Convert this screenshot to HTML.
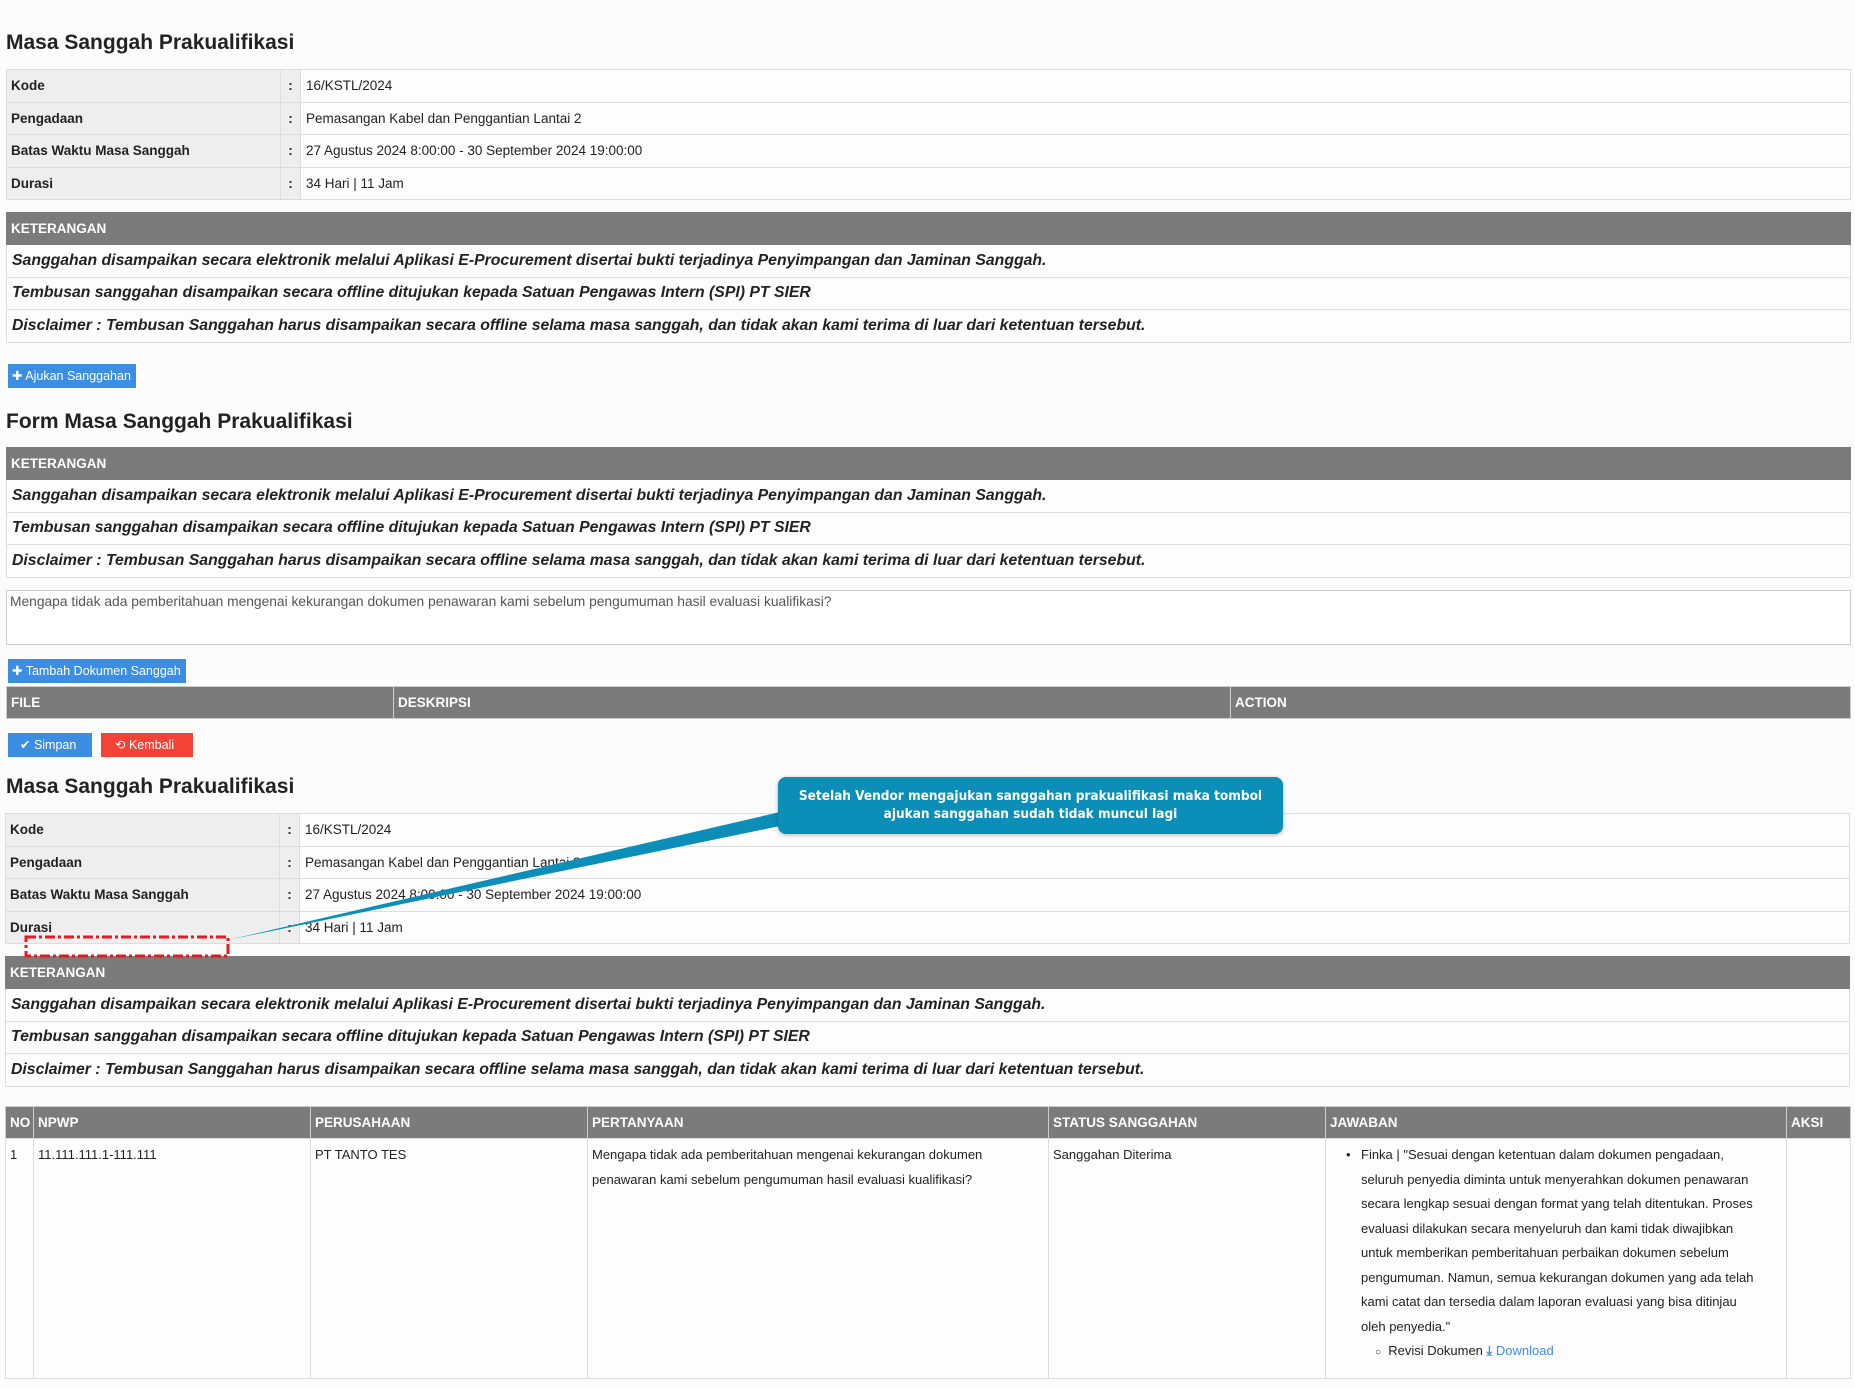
<!DOCTYPE html>
<html><head><meta charset="utf-8">
<style>
*{box-sizing:border-box;margin:0;padding:0}
body{width:1855px;height:1388px;background:#fcfcfc;font-family:"Liberation Sans",Arial,sans-serif;color:#222;position:relative;overflow:hidden;font-size:13.5px}
.a{position:absolute}
h2{position:absolute;left:6px;font-size:21px;font-weight:bold;color:#222}
table{position:absolute;left:6px;width:1845px;border-collapse:collapse;table-layout:fixed}
td,th{border:1px solid #ddd;padding:0 5px;text-align:left;vertical-align:middle;white-space:nowrap}
.info td{height:32.5px;background:#fdfdfd}
.info td.l{background:#eee;font-weight:bold;width:274px;padding-left:4px}
.info td.c{background:#eee;width:20px;padding:0;text-align:center;font-weight:bold}
.ket th{background:#7b7b7b;color:#fff;height:32px;font-size:13.5px;border-color:#7b7b7b;padding-left:4px}
.ket td{height:32.5px;font-weight:bold;font-style:italic;font-size:15.8px;background:#fdfdfd}
.btn{position:absolute;color:#fff;font-size:12.5px;line-height:24px;padding-left:4px;white-space:nowrap;overflow:hidden}
.blue{background:#3c8ee3}.red{background:#f44336}
.hd th{background:#7b7b7b;color:#fff;height:32px;font-size:13.5px;border:1px solid #ccc;padding:0 4px}
.bd td{vertical-align:top;padding:4px 4px;background:#fdfdfd;line-height:24.5px;font-size:13px}
</style></head><body>

<h2 style="top:31px">Masa Sanggah Prakualifikasi</h2>
<table class="info" style="top:69px">
<tr><td class="l">Kode</td><td class="c">:</td><td>16/KSTL/2024</td></tr>
<tr><td class="l">Pengadaan</td><td class="c">:</td><td>Pemasangan Kabel dan Penggantian Lantai 2</td></tr>
<tr><td class="l">Batas Waktu Masa Sanggah</td><td class="c">:</td><td>27 Agustus 2024 8:00:00 - 30 September 2024 19:00:00</td></tr>
<tr><td class="l">Durasi</td><td class="c">:</td><td>34 Hari | 11 Jam</td></tr>
</table>
<table class="ket" style="top:212px">
<tr><th>KETERANGAN</th></tr>
<tr><td>Sanggahan disampaikan secara elektronik melalui Aplikasi E-Procurement disertai bukti terjadinya Penyimpangan dan Jaminan Sanggah.</td></tr>
<tr><td>Tembusan sanggahan disampaikan secara offline ditujukan kepada Satuan Pengawas Intern (SPI) PT SIER</td></tr>
<tr><td>Disclaimer : Tembusan Sanggahan harus disampaikan secara offline selama masa sanggah, dan tidak akan kami terima di luar dari ketentuan tersebut.</td></tr>
</table>
<div class="btn blue" style="left:8px;top:364px;width:128px">✚ Ajukan Sanggahan</div>

<h2 style="top:410px">Form Masa Sanggah Prakualifikasi</h2>
<table class="ket" style="top:447px">
<tr><th>KETERANGAN</th></tr>
<tr><td>Sanggahan disampaikan secara elektronik melalui Aplikasi E-Procurement disertai bukti terjadinya Penyimpangan dan Jaminan Sanggah.</td></tr>
<tr><td>Tembusan sanggahan disampaikan secara offline ditujukan kepada Satuan Pengawas Intern (SPI) PT SIER</td></tr>
<tr><td>Disclaimer : Tembusan Sanggahan harus disampaikan secara offline selama masa sanggah, dan tidak akan kami terima di luar dari ketentuan tersebut.</td></tr>
</table>
<div class="a" style="left:6px;top:590px;width:1845px;height:55px;border:1px solid #ccc;background:#fff;padding:3px 3px;color:#555;font-size:13.8px">Mengapa tidak ada pemberitahuan mengenai kekurangan dokumen penawaran kami sebelum pengumuman hasil evaluasi kualifikasi?</div>
<div class="btn blue" style="left:8px;top:659px;width:178px">✚ Tambah Dokumen Sanggah</div>
<table class="hd" style="top:686px">
<tr><th style="width:387px">FILE</th><th style="width:837px">DESKRIPSI</th><th>ACTION</th></tr>
</table>
<div class="btn blue" style="left:8px;top:733px;width:84px;padding-left:12px">✔ Simpan</div>
<div class="btn red" style="left:101px;top:733px;width:92px;padding-left:14px">⟲ Kembali</div>

<h2 style="top:775px">Masa Sanggah Prakualifikasi</h2>
<table class="info" style="top:813px;left:5px">
<tr><td class="l">Kode</td><td class="c">:</td><td>16/KSTL/2024</td></tr>
<tr><td class="l">Pengadaan</td><td class="c">:</td><td>Pemasangan Kabel dan Penggantian Lantai 2</td></tr>
<tr><td class="l">Batas Waktu Masa Sanggah</td><td class="c">:</td><td>27 Agustus 2024 8:00:00 - 30 September 2024 19:00:00</td></tr>
<tr><td class="l">Durasi</td><td class="c">:</td><td>34 Hari | 11 Jam</td></tr>
</table>
<table class="ket" style="top:956px;left:5px">
<tr><th>KETERANGAN</th></tr>
<tr><td>Sanggahan disampaikan secara elektronik melalui Aplikasi E-Procurement disertai bukti terjadinya Penyimpangan dan Jaminan Sanggah.</td></tr>
<tr><td>Tembusan sanggahan disampaikan secara offline ditujukan kepada Satuan Pengawas Intern (SPI) PT SIER</td></tr>
<tr><td>Disclaimer : Tembusan Sanggahan harus disampaikan secara offline selama masa sanggah, dan tidak akan kami terima di luar dari ketentuan tersebut.</td></tr>
</table>

<table class="hd" style="top:1106px;left:5px;width:1846px">
<tr><th style="width:28px">NO</th><th style="width:277px">NPWP</th><th style="width:277px">PERUSAHAAN</th><th style="width:461px">PERTANYAAN</th><th style="width:277px">STATUS SANGGAHAN</th><th style="width:461px">JAWABAN</th><th>AKSI</th></tr>
</table>
<table class="bd" style="top:1138px;left:5px;width:1846px">
<tr style="height:240px"><td style="width:28px">1</td><td style="width:277px">11.111.111.1-111.111</td><td style="width:277px">PT TANTO TES</td><td style="width:461px">Mengapa tidak ada pemberitahuan mengenai kekurangan dokumen<br>penawaran kami sebelum pengumuman hasil evaluasi kualifikasi?</td><td style="width:277px">Sanggahan Diterima</td>
<td style="width:461px;padding-left:35px;position:relative;overflow:hidden"><span style="position:absolute;left:20px">•</span>Finka | "Sesuai dengan ketentuan dalam dokumen pengadaan,<br>seluruh penyedia diminta untuk menyerahkan dokumen penawaran<br>secara lengkap sesuai dengan format yang telah ditentukan. Proses<br>evaluasi dilakukan secara menyeluruh dan kami tidak diwajibkan<br>untuk memberikan pemberitahuan perbaikan dokumen sebelum<br>pengumuman. Namun, semua kekurangan dokumen yang ada telah<br>kami catat dan tersedia dalam laporan evaluasi yang bisa ditinjau<br>oleh penyedia."<br><span style="padding-left:14px;font-size:10px">○</span>&nbsp; Revisi Dokumen <span style="color:#3c8ee3"><b>⤓</b> Download</span></td><td></td></tr>
</table>

<svg class="a" style="left:0;top:0" width="1855" height="1388">
<polygon points="228,940 780,812 780,826" fill="#0b8fb8"/>
<rect x="26" y="937" width="202" height="19" fill="none" stroke="#e21b1b" stroke-width="3" stroke-dasharray="10,3,3,3"/>
</svg>
<div class="a" style="left:778px;top:777px;width:505px;height:57px;background:#0b8fb8;border-radius:8px;box-shadow:0 1px 4px rgba(0,0,0,.3);color:#fff;font-family:'DejaVu Sans Condensed','DejaVu Sans',sans-serif;font-weight:bold;font-size:13.5px;text-align:center;line-height:18px;padding-top:10px">Setelah Vendor mengajukan sanggahan prakualifikasi maka tombol<br>ajukan sanggahan sudah tidak muncul lagi</div>
</body></html>
